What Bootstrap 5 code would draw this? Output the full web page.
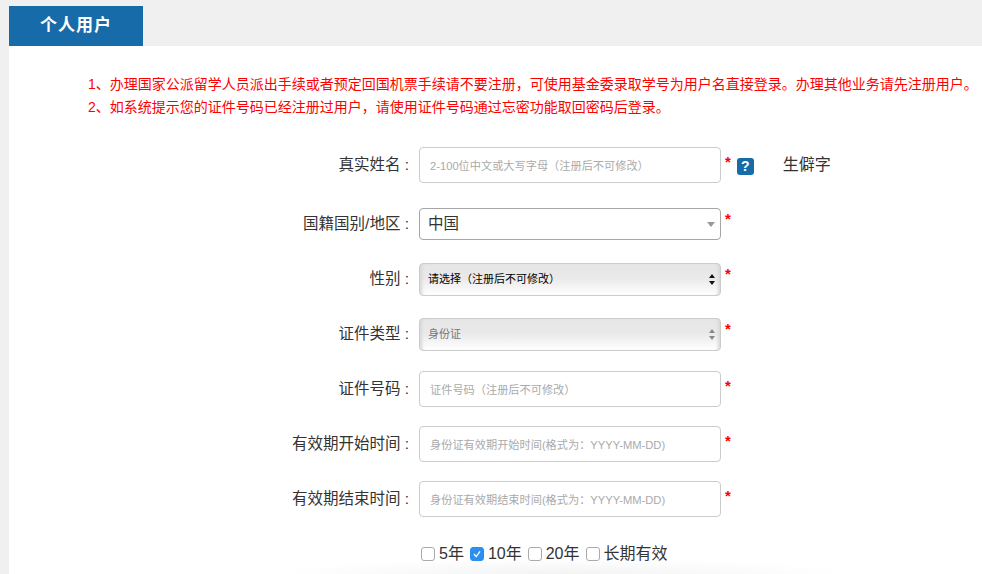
<!DOCTYPE html>
<html lang="zh">
<head>
<meta charset="utf-8">
<title>个人用户</title>
<link rel="stylesheet" href="https://cdn.jsdelivr.net/npm/bootstrap@5.3.0/dist/css/bootstrap.min.css">
<style>
html,body{height:574px;overflow:hidden}
body{background:#f0f0f0;font-family:"Liberation Sans","Noto Sans CJK SC",sans-serif;color:#333;font-size:14px;padding:6px 0 0 9px}
.tab-head{width:134px;height:40px;background:#186ba9;color:#fff;font-size:17px;font-weight:700;letter-spacing:1px;line-height:40px;padding-left:31px}
.panel{background:#fff;height:528px;position:relative;overflow:hidden}
.notice{color:#f00;font-size:14px;line-height:23px;padding:27px 0 0 79px;white-space:nowrap;height:101px}
.frow{display:flex;align-items:flex-start}
.flabel{width:410px;text-align:right;font-size:15.5px;color:#333;padding-right:10px;flex:none;white-space:nowrap}
.ctl{width:302px;flex:none;border-radius:4px;background:#fff}
.tinput{height:36px;border:1px solid #ccc;color:#aaa;font-size:11.2px;padding:2px 10px 0;box-shadow:none}
.tinput::placeholder{color:#aaa;opacity:1}
.sel-white{height:32px;border:1px solid #a6a6a6;color:#333;font-size:15.5px;padding:0 5px 0 8px;display:flex;align-items:center;justify-content:space-between}
.sel-gray{height:33px;border:1px solid #ccc;font-size:11px;padding:0 5px 0 8px;color:#000;display:flex;align-items:center;justify-content:space-between;background:linear-gradient(#e6e6e6 0,#e9e9e9 45%,#fff 100%);box-shadow:inset 4px 0 3px -2px #d8d8d8,inset -4px 0 3px -2px #d8d8d8}
.sel-gray.off{color:#777}
.req{color:#f00;font-size:15px;font-weight:700;line-height:14px;margin-left:4px}
.req-i{padding-top:8px}
.req-s{padding-top:4px}
.helpq{width:17px;height:17px;background:#186ba9;color:#fff;border-radius:3px;font-size:14px;font-weight:700;line-height:17px;text-align:center;margin:11px 0 0 6px}
.rare{font-size:16px;color:#333;margin-left:29px;padding-top:6px}
.lab-input{line-height:21px;padding-top:7px}
.lab-sel{line-height:21px;padding-top:5px}
.mt25{margin-top:25px}.mt23{margin-top:23px}.mt22{margin-top:22px}.mt20{margin-top:20px}.mt19{margin-top:19px}
.checks{margin:27px 0 0 412px;display:flex;align-items:center;gap:6px;font-size:16px;color:#333;line-height:20px;position:relative;z-index:1}
.checks label{display:flex;align-items:center;gap:4px}
.cbox{width:14px;height:14px;border:1px solid #aaa;border-radius:3px;background:#fff;flex:none;display:block}
.cbox.on{background:#2b8ff0;border-color:#2b8ff0}
.arrow-down{width:0;height:0;border-left:4px solid transparent;border-right:4px solid transparent;border-top:5px solid #999}
.updown{display:block;flex:none}
.fade-shadow{position:absolute;left:270px;width:570px;bottom:0;height:16px;background:radial-gradient(ellipse 50% 100% at 50% 100%,#f3f3f3,#fff)}
</style>
</head>
<body>
<div class="tab-head">个人用户</div>
<div class="panel">
  <div class="fade-shadow"></div>
  <div class="notice">
    <div>1、办理国家公派留学人员派出手续或者预定回国机票手续请不要注册，可使用基金委录取学号为用户名直接登录。办理其他业务请先注册用户。</div>
    <div>2、如系统提示您的证件号码已经注册过用户，请使用证件号码通过忘密功能取回密码后登录。</div>
  </div>
  <div class="frow">
    <div class="flabel lab-input">真实姓名 :</div>
    <input class="ctl tinput form-control" placeholder="2-100位中文或大写字母（注册后不可修改）">
    <span class="req req-i">*</span>
    <span class="helpq">?</span>
    <span class="rare">生僻字</span>
  </div>
  <div class="frow mt25">
    <div class="flabel lab-sel">国籍国别/地区 :</div>
    <div class="ctl sel-white"><span>中国</span><i class="arrow-down"></i></div>
    <span class="req req-s">*</span>
  </div>
  <div class="frow mt23">
    <div class="flabel lab-sel">性别 :</div>
    <div class="ctl sel-gray"><span>请选择（注册后不可修改）</span><svg class="updown" width="6" height="11" viewBox="0 0 6 11"><path d="M3 0 6 4H0zM3 11 0 7H6z" fill="#111"/></svg></div>
    <span class="req req-s">*</span>
  </div>
  <div class="frow mt22">
    <div class="flabel lab-sel">证件类型 :</div>
    <div class="ctl sel-gray off"><span>身份证</span><svg class="updown" width="6" height="11" viewBox="0 0 6 11"><path d="M3 0 6 4H0zM3 11 0 7H6z" fill="#888"/></svg></div>
    <span class="req req-s">*</span>
  </div>
  <div class="frow mt20">
    <div class="flabel lab-input">证件号码 :</div>
    <input class="ctl tinput form-control" placeholder="证件号码（注册后不可修改）">
    <span class="req req-i">*</span>
  </div>
  <div class="frow mt19">
    <div class="flabel lab-input">有效期开始时间 :</div>
    <input class="ctl tinput form-control" placeholder="身份证有效期开始时间(格式为：YYYY-MM-DD)">
    <span class="req req-i">*</span>
  </div>
  <div class="frow mt19">
    <div class="flabel lab-input">有效期结束时间 :</div>
    <input class="ctl tinput form-control" placeholder="身份证有效期结束时间(格式为：YYYY-MM-DD)">
    <span class="req req-i">*</span>
  </div>
  <div class="checks">
    <label><span class="cbox"></span>5年</label>
    <label><span class="cbox on"><svg width="12" height="12" viewBox="0 0 12 12" class="d-block"><path d="M3 6 5.2 8.6 9 3.4" fill="none" stroke="#fff" stroke-width="1.3"/></svg></span>10年</label>
    <label><span class="cbox"></span>20年</label>
    <label><span class="cbox"></span>长期有效</label>
  </div>
</div>
<script src="https://cdn.jsdelivr.net/npm/bootstrap@5.3.0/dist/js/bootstrap.bundle.min.js"></script>
</body>
</html>
